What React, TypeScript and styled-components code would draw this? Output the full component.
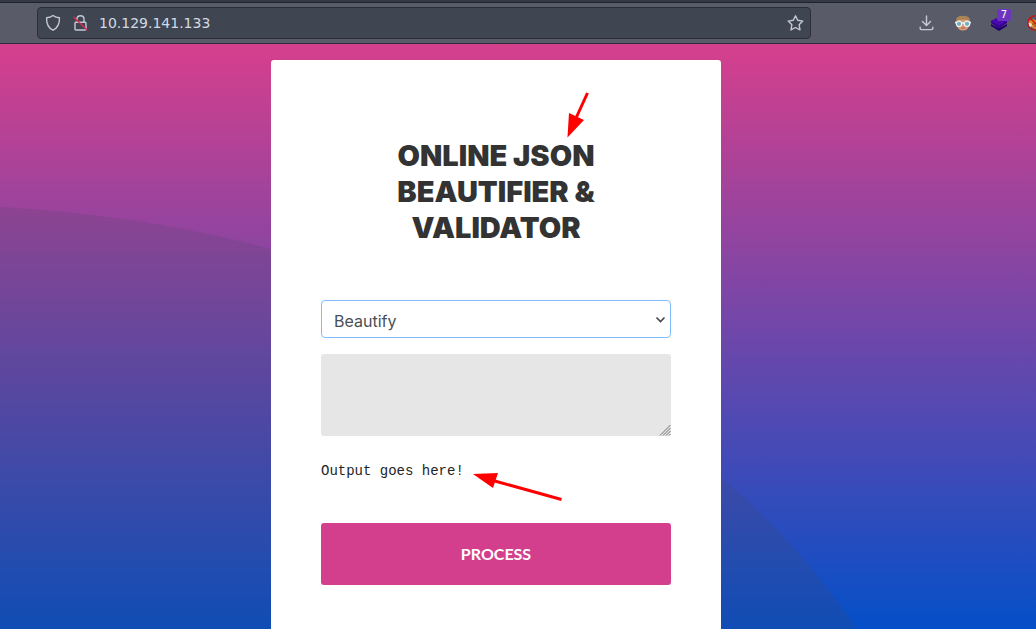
import React from "react";
import styled, { createGlobalStyle } from "styled-components";

const GlobalStyle = createGlobalStyle`
  * { box-sizing: border-box; }
  body { margin: 0; font-family: Inter, "Liberation Sans", sans-serif; }
`;

const Window = styled.div`
  display: flex;
  flex-direction: column;
  height: 100vh;
  overflow: hidden;
`;

const Toolbar = styled.header`
  display: flex;
  flex: none;
  align-items: center;
  height: 44px;
  padding: 0 0 0 37px;
  background: #5a5b68;
  border-top: 2px solid #353946;
  border-bottom: 1px solid #2b2e3b;
  box-shadow: inset 0 1px #20232c;
`;

const AddressBar = styled.label`
  display: flex;
  flex: 1;
  align-items: center;
  height: 32px;
  padding: 0 6px 0 7px;
  background: #404552;
  border: 1px solid #2b2e39;
  border-radius: 4px;
`;

const AddressIcon = styled.svg`
  flex: none;
  width: 18px;
  height: 18px;
  margin-right: 9px;
  fill: none;
  stroke: #c4c9d6;
  stroke-linejoin: round;
  stroke-linecap: round;
`;

const AddressInput = styled.input`
  flex: 1;
  min-width: 0;
  padding: 0;
  border: 0;
  outline: 0;
  background: transparent;
  color: #d3dae3;
  font: 14px "DejaVu Sans", sans-serif;
`;

const IconButton = styled.button`
  display: flex;
  flex: none;
  align-items: center;
  justify-content: center;
  padding: 0;
  border: 0;
  background: transparent;
`;

const Extensions = styled.div`
  display: flex;
  width: 127px;
  margin-left: 98px;
  overflow: hidden;

  ${IconButton} {
    position: relative;
    width: 36px;
    height: 32px;
  }
`;

const Badge = styled.span`
  position: absolute;
  top: 2px;
  right: 6px;
  width: 14px;
  height: 12px;
  border-radius: 2px;
  background: #6b35bd;
  color: #fff;
  font: 10px/12px "DejaVu Sans", sans-serif;
  text-align: center;
`;

const Page = styled.main`
  position: relative;
  display: flex;
  flex: 1;
  align-items: flex-start;
  justify-content: center;
  min-height: 0;
  padding: 16px 44px 0 0;
  overflow: hidden;
  background: linear-gradient(#d63f8c, #054fc8);
`;

const Backdrop = styled.svg`
  position: absolute;
  inset: 0;
  width: 100%;
  height: 100%;
`;

const Card = styled.section`
  position: relative;
  width: 100%;
  max-width: 450px;
  padding: 78px 50px;
  background: #fff;
  border-radius: 3px;
`;

const Title = styled.h1`
  margin: 0 0 54px;
  color: #333;
  font: 900 29px/36px Inter, sans-serif;
  text-align: center;
  text-transform: uppercase;
`;

const Form = styled.form`
  display: flex;
  flex-direction: column;
`;

const Field = styled.div`
  position: relative;
  display: flex;
  margin-bottom: 16px;
`;

const Select = styled.select`
  width: 100%;
  height: 38px;
  padding: 4px 12px 0;
  appearance: none;
  border: 1px solid #80bdff;
  border-radius: 4px;
  outline: 0;
  background: #fff;
  color: #495057;
  font: 16px Inter, sans-serif;
`;

const Chevron = styled.svg`
  position: absolute;
  top: 15px;
  right: 5px;
  width: 11px;
  height: 9px;
  pointer-events: none;
`;

const TextArea = styled.textarea`
  width: 100%;
  height: 82px;
  padding: 10px;
  border: 0;
  border-radius: 3px;
  outline: 0;
  background: #e6e6e6;
  resize: vertical;

  &::-webkit-resizer { background: transparent; }
`;

const Grip = styled.svg`
  position: absolute;
  right: 0;
  bottom: 0;
  width: 12px;
  height: 12px;
  pointer-events: none;
`;

const Output = styled.pre`
  margin: 8px 0 40px;
  color: #212529;
  font: 14px/23px "Liberation Mono", monospace;
`;

const Submit = styled.button`
  height: 62px;
  padding: 0 0 2px;
  border: 0;
  border-radius: 3px;
  background: #d33f8d;
  color: #fff;
  font: 700 16px Lato, sans-serif;
  text-transform: uppercase;
`;

const Annotations = styled.svg`
  position: absolute;
  inset: 0;
  width: 100%;
  height: 100%;
  overflow: visible;
  pointer-events: none;
`;

function BrowserToolbar() {
  return (
    <Toolbar>
      <AddressBar>
        <AddressIcon viewBox="0 0 18 18" strokeWidth="1.4" aria-hidden="true">
          <path d="M8 1.5C6.3 2.8 4 3.6 1.6 3.7C1.3 9.5 2.7 13.5 8 16.2C13.3 13.5 14.7 9.5 14.4 3.7C12 3.6 9.7 2.8 8 1.5Z" />
        </AddressIcon>
        <AddressIcon viewBox="0 0 18 18" strokeWidth="1.4" aria-hidden="true">
          <path d="M3.5 8.3H13Q14 8.3 14 9.3V15Q14 16 13 16H4Q3 16 3 15V8.8M5 6V5.2C5 .6 12 .6 12 5.2V8" />
          <path d="M1.8 3.2L14.8 15.8" stroke="#e22850" strokeWidth="1.3" />
        </AddressIcon>
        <AddressInput aria-label="Address" defaultValue="10.129.141.133" />
        <IconButton type="button" aria-label="Bookmark">
          <svg width="17" height="18" viewBox="0 0 17 18" fill="none" stroke="#c4c9d6" strokeWidth="1.4" strokeLinejoin="round">
            <path d="M8.5 1.8L10.7 6.3L15.8 7.1L12.1 10.7L13 15.9L8.5 13.5L4 15.9L4.9 10.7L1.2 7.1L6.3 6.3Z" />
          </svg>
        </IconButton>
      </AddressBar>
      <Extensions>
        <IconButton type="button" aria-label="Downloads">
          <svg width="16" height="16" viewBox="0 0 16 16" fill="none" stroke="#c7cad5" strokeWidth="1.4" strokeLinecap="round" strokeLinejoin="round">
            <path d="M7.5 1V10.2M3.5 6.6L7.5 10.4L11.5 6.6M1.2 12.3V13.5Q1.2 14.6 2.4 14.6H12.6Q13.8 14.6 13.8 13.5V12.3" />
          </svg>
        </IconButton>
        <IconButton type="button" aria-label="Foxy disguise">
          <svg width="16" height="16" viewBox="0 0 16 16">
            <path d="M1.5 6Q2 1 8 1Q14 1 14.5 6V10Q13 15.5 8 15.5Q3 15.5 1.5 10Z" fill="#d99a78" />
            <path d="M1 7Q0 .8 8 .8Q16 .8 15 7L12.5 5Q8 3.8 3.5 5Z" fill="#a68453" />
            <path d="M6 13H10" stroke="#b55f48" />
            <circle cx="4" cy="8.8" r="2.7" fill="#72b0c1" stroke="#edf5f5" strokeWidth="1.2" />
            <circle cx="12" cy="8.8" r="2.7" fill="#72b0c1" stroke="#edf5f5" strokeWidth="1.2" />
            <path d="M0 7.5H2M6.8 8H9.2M14 7.5H16" stroke="#edf5f5" strokeWidth="1.5" />
          </svg>
        </IconButton>
        <IconButton type="button" aria-label="Wappalyzer">
          <svg width="16" height="16" viewBox="0 0 16 16">
            <path d="M0 9V11L8 16L16 11V9L8 13Z" fill="#210070" />
            <path d="M0 6V8L8 13L16 8V6L8 2Z" fill="#32008e" />
            <path d="M0 6.2L8 2L16 6.2L8 10.8Z" fill="#4b08ae" />
          </svg>
          <Badge>7</Badge>
        </IconButton>
        <IconButton type="button" aria-label="FoxyProxy">
          <svg width="16" height="16" viewBox="0 0 16 16">
            <path d="M2 6L6 4L12 7L15 12L8 14L3 11Z" fill="#e98a28" />
            <path d="M1 7L5 9L4 12L2 11Z" fill="#ece6df" />
            <path d="M5 9H8M7 11H10" stroke="#704018" />
            <circle cx="8" cy="8" r="7.2" fill="none" stroke="#c61212" strokeWidth="1.3" />
            <path d="M3 3L13 13" stroke="#c61212" strokeWidth="1.3" />
          </svg>
        </IconButton>
      </Extensions>
    </Toolbar>
  );
}

export default function App() {
  return (
    <Window>
      <GlobalStyle />
      <BrowserToolbar />
      <Page>
        <Backdrop viewBox="0 0 1036 585" preserveAspectRatio="none" aria-hidden="true">
          <path d="M0 163C92 168 180 181 271 205C440 247 595 330 721 434C775 478 815 525 857 585H0Z" fill="#484858" fillOpacity=".17" />
        </Backdrop>
        <Card>
          <Title>Online JSON Beautifier &amp; Validator</Title>
          <Form onSubmit={(event: React.FormEvent) => event.preventDefault()}>
            <Field>
              <Select aria-label="Action" defaultValue="beautify">
                <option value="beautify">Beautify</option>
                <option value="validate">Validate</option>
              </Select>
              <Chevron viewBox="0 0 11 9" fill="none" stroke="#40464c" strokeWidth="1.6" aria-hidden="true">
                <path d="M1.5 2.5L5.5 6.5L9.5 2.5" />
              </Chevron>
            </Field>
            <Field>
              <TextArea aria-label="JSON input" />
              <Grip viewBox="0 0 12 12" stroke="#707070" aria-hidden="true">
                <path d="M1 11.5L11.5 1M4 11.5L11.5 4M7 11.5L11.5 7M10 11.5L11.5 10" />
              </Grip>
            </Field>
            <Output>Output goes here!</Output>
            <Submit type="submit">Process</Submit>
          </Form>
          <Annotations fill="red" stroke="red" aria-hidden="true">
            <path d="M316.500 33L305.500 57" strokeWidth="3" />
            <path d="M296.500 77.500L298 53L313 60Z" stroke="none" />
            <path d="M290.500 439.500L222 420.500" strokeWidth="3" />
            <path d="M202 414L227 413L222 428Z" stroke="none" />
          </Annotations>
        </Card>
      </Page>
    </Window>
  );
}
